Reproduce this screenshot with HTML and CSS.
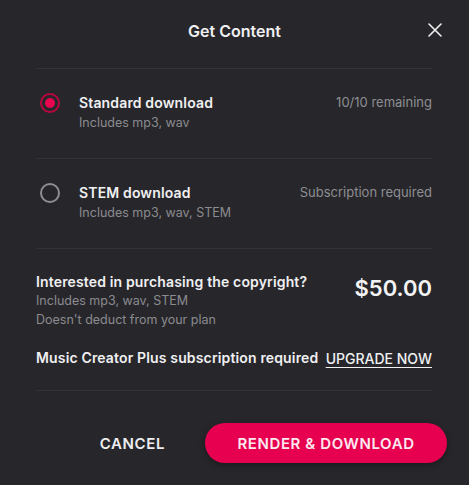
FILE: index.html
```html
<html>
<head>
  <meta charset="UTF-8">
  <meta name="viewport" content="width=device-width, initial-scale=1.0">
  <link rel="stylesheet" href="styles.css">
</head>

<body>
<div id="dialog">
  <div class="header">
    <span></span>
    <div class="title">Get Content</div>
    <button class="close" aria-label="Close">
      <svg width="14" height="14" viewBox="0 0 14 14">
        <path d="M1 1 L13 13 M13 1 L1 13" stroke="#f0f0f0" stroke-width="1.6" stroke-linecap="round" fill="none" />
      </svg>
    </button>
  </div>

  <div class="body">
    <label class="option">
      <span class="radio checked"></span>
      <div class="option_text">
        <div class="option_title">Standard download</div>
        <div class="option_sub">Includes mp3, wav</div>
      </div>
      <div class="option_note">10/10 remaining</div>
    </label>

    <label class="option">
      <span class="radio"></span>
      <div class="option_text">
        <div class="option_title">STEM download</div>
        <div class="option_sub">Includes mp3, wav, STEM</div>
      </div>
      <div class="option_note">Subscription required</div>
    </label>

    <div class="copyright">
      <div class="copyright_top">
        <div>
          <div class="option_title">Interested in purchasing the copyright?</div>
          <div class="option_sub">Includes mp3, wav, STEM</div>
          <div class="option_sub">Doesn't deduct from your plan</div>
        </div>
        <div class="price">$50.00</div>
      </div>
      <div class="upgrade_row">
        <div class="option_title">Music Creator Plus subscription required</div>
        <a href="#" class="upgrade">UPGRADE NOW</a>
      </div>
    </div>
  </div>

  <div class="footer">
    <button class="cancel">CANCEL</button>
    <button class="render">RENDER &amp; DOWNLOAD</button>
  </div>
</div>
</body>
</html>
```

FILE: styles.css
```css
* {
    box-sizing: border-box;
    padding: 0;
    margin: 0;
    font-family: 'Inter', 'Open Sans', sans-serif;
}

body, html {
    width: 100%;
    height: 100%;
    background: #27272b;
    color: #f0f0f2;
}

#dialog {
    width: 100%;
    height: 100%;
    background: #27272b;
}

.header {
    display: grid;
    grid-template-columns: 1fr auto 1fr;
    align-items: center;
    height: 60px;
    padding: 0 22px;
}

.title {
    font-size: 16px;
    font-weight: 600;
    color: #f0f0f2;
    padding-top: 1px;
}

.close {
    justify-self: end;
    width: 24px;
    height: 24px;
    display: flex;
    align-items: center;
    justify-content: center;
    background: none;
    border: 0;
    cursor: pointer;
}

.body {
    margin: 8px 37px 0 36px;
    border-top: 1px solid #323237;
}

.option {
    display: flex;
    align-items: flex-start;
    padding: 24px 0 26px 4px;
    border-bottom: 1px solid #323237;
    cursor: pointer;
}

.radio {
    width: 20px;
    height: 20px;
    flex: none;
    border-radius: 50%;
    border: 2px solid #8e8e92;
    margin-right: 19px;
    display: flex;
    align-items: center;
    justify-content: center;
}

.radio.checked {
    border-color: #b8073f;
}

.radio.checked::after {
    content: "";
    width: 10px;
    height: 10px;
    border-radius: 50%;
    background: #e8064f;
}

.option_text {
    flex: 1;
}

.option_title {
    font-size: 14px;
    line-height: 20px;
    font-weight: 600;
    letter-spacing: 0.15px;
    color: #f0f0f2;
}

.option_sub {
    font-size: 12.5px;
    line-height: 19px;
    color: #8b8b90;
}

.option_note {
    font-size: 13px;
    line-height: 18px;
    color: #8e8e92;
}

.copyright {
    padding: 24px 0 22px;
    border-bottom: 1px solid #323237;
}

.copyright_top {
    display: flex;
    justify-content: space-between;
    align-items: flex-start;
}

.copyright_top .option_title {
    line-height: 18px;
}

.price {
    font-size: 22px;
    font-weight: 600;
    line-height: 28px;
    color: #f4f4f6;
    padding-top: 1px;
}

.upgrade_row {
    display: flex;
    justify-content: space-between;
    align-items: center;
    margin-top: 19px;
}

.upgrade {
    font-size: 14px;
    font-weight: 500;
    letter-spacing: 0;
    color: #f0f0f2;
    text-decoration: underline;
    text-underline-offset: 3px;
}

.footer {
    display: flex;
    justify-content: flex-end;
    align-items: center;
    padding: 32px 22px 0 0;
}

.footer button {
    height: 40px;
    border: 0;
    font-size: 15px;
    font-weight: 600;
    letter-spacing: 0.6px;
    cursor: pointer;
}

.cancel {
    background: none;
    color: #eeeef0;
    padding: 0 18px;
    margin-right: 22px;
}

.render {
    width: 242px;
    background: #e6004f;
    color: #fde8ef;
    border-radius: 20px;
    box-shadow: 0 2px 6px rgba(0, 0, 0, 0.35);
}
```
